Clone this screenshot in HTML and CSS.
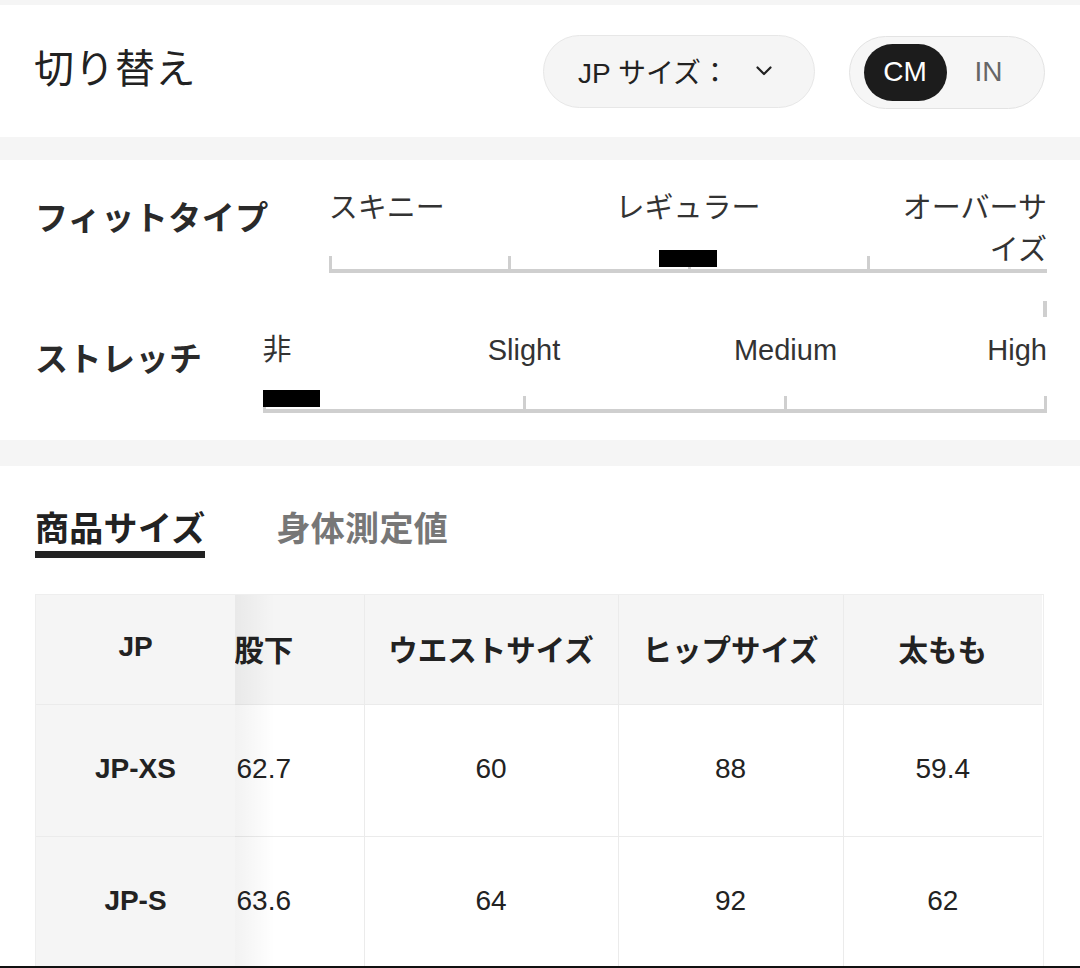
FILE: index.html
```html
<!DOCTYPE html>
<html lang="ja">
<head>
<meta charset="utf-8">
<title>サイズ</title>
<link rel="stylesheet" href="styles.css">
</head>
<body>
<div class="page">
  <div class="band band-top"></div>

  <section class="switch">
    <h2 class="switch-title">切り替え</h2>
    <div class="switch-controls">
      <div class="size-select">
        <span class="size-select-text">JP サイズ：</span>
        <svg class="chevron" width="16" height="10" viewBox="0 0 16 10"><path d="M1.5 1.5 L8 8 L14.5 1.5" fill="none" stroke="#222" stroke-width="2.2" stroke-linecap="round" stroke-linejoin="round"/></svg>
      </div>
      <div class="unit-toggle">
        <span class="unit unit-active">CM</span>
        <span class="unit unit-idle">IN</span>
      </div>
    </div>
  </section>

  <div class="band band-mid"></div>

  <section class="fit">
    <div class="fit-row">
      <div class="fit-label">フィットタイプ</div>
      <div class="scale">
        <div class="scale-labels scale-labels-fit">
          <span class="lbl lbl-start">スキニー</span>
          <span class="lbl lbl-mid2">レギュラー</span>
          <span class="lbl lbl-end4">オーバーサイズ</span>
        </div>
        <div class="track track-fit">
          <span class="seg"></span><span class="seg"></span><span class="seg"></span><span class="seg"></span>
          <span class="marker marker-center"></span>
        </div>
        <div class="end-tick"></div>
      </div>
    </div>

    <div class="fit-row fit-row-stretch">
      <div class="fit-label fit-label-stretch">ストレッチ</div>
      <div class="scale">
        <div class="scale-labels scale-labels-stretch">
          <span class="lbl lbl-start">非</span>
          <span class="lbl lbl-s1">Slight</span>
          <span class="lbl lbl-s2">Medium</span>
          <span class="lbl lbl-end6">High</span>
        </div>
        <div class="track track-stretch">
          <span class="seg"></span><span class="seg"></span><span class="seg seg-last"></span>
          <span class="marker marker-start"></span>
        </div>
      </div>
    </div>
  </section>

  <div class="band band-low"></div>

  <section class="sizes">
    <div class="tabs">
      <div class="tab tab-active">商品サイズ</div>
      <div class="tab">身体測定値</div>
    </div>

    <div class="size-table">
      <div class="fixed-col">
        <div class="fcell fcell-head">JP</div>
        <div class="fcell">JP-XS</div>
        <div class="fcell">JP-S</div>
      </div>
      <div class="scroll-area">
        <table class="data">
          <colgroup>
            <col class="c-inseam"><col class="c-waist"><col class="c-hip"><col class="c-thigh">
          </colgroup>
          <thead>
            <tr><th>股下</th><th>ウエストサイズ</th><th>ヒップサイズ</th><th>太もも</th></tr>
          </thead>
          <tbody>
            <tr><td>62.7</td><td>60</td><td>88</td><td>59.4</td></tr>
            <tr><td>63.6</td><td>64</td><td>92</td><td>62</td></tr>
          </tbody>
        </table>
      </div>
    </div>
  </section>
</div>
</body>
</html>
```

FILE: styles.css
```css
html, body {
  margin: 0;
  padding: 0;
  background: #fff;
}
body {
  font-family: "Liberation Sans", "Noto Sans CJK JP", sans-serif;
  color: #222;
}
.page {
  height: 968px;
  overflow: hidden;
  box-sizing: border-box;
  border-bottom: 2px solid #111;
}

.band { background: #f5f5f5; }
.band-top { height: 5px; }
.band-mid { height: 23px; }
.band-low { height: 26px; }

/* ---------- switch ---------- */
.switch {
  height: 132px;
  box-sizing: border-box;
  padding: 0 35px;
  display: flex;
  align-items: center;
  justify-content: space-between;
}
.switch-title {
  margin: 0 0 4px -1px;
  font-size: 40px;
  line-height: 48px;
  font-weight: 400;
  color: #222;
  letter-spacing: 0.5px;
}
.switch-controls {
  display: flex;
  align-items: center;
  gap: 34px;
}
.size-select {
  width: 272px;
  height: 73px;
  box-sizing: border-box;
  border-radius: 37px;
  background: #f5f5f5;
  border: 1.5px solid #e7e7e7;
  display: flex;
  align-items: center;
  padding-left: 34px;
  font-size: 28px;
  color: #222;
}
.chevron {
  margin-left: auto;
  margin-right: 42px;
}
.unit-toggle {
  width: 196px;
  height: 73px;
  box-sizing: border-box;
  border-radius: 37px;
  background: #f6f6f6;
  border: 1.5px solid #e3e3e3;
  display: flex;
  align-items: center;
  padding-left: 13.5px;
  margin-top: 2px;
  font-size: 28px;
}
.unit-active {
  width: 83px;
  height: 57px;
  border-radius: 29px;
  background: #1c1c1c;
  color: #fff;
  display: flex;
  align-items: center;
  justify-content: center;
}
.unit-idle {
  margin-left: 28px;
  color: #666;
}

/* ---------- fit ---------- */
.fit {
  height: 280px;
  box-sizing: border-box;
  padding: 27px 33px 27px 35px;
}
.fit-row {
  display: flex;
  align-items: flex-start;
  gap: 60px;
}
.fit-row-stretch { margin-top: 13px; }
.fit-label {
  font-size: 33px;
  line-height: 40px;
  font-weight: 700;
  color: #2a2a2a;
  letter-spacing: 0.5px;
  margin-top: 12px;
  white-space: nowrap;
}
.fit-label-stretch { margin-top: 10px; }
.scale {
  flex: 1;
  min-width: 0;
}
.scale-labels {
  display: grid;
  color: #333;
}
.scale-labels-fit {
  grid-template-columns: repeat(4, 1fr);
  font-size: 29px;
  line-height: 42px;
}
.scale-labels-stretch {
  grid-template-columns: repeat(6, 1fr);
  font-size: 29px;
  line-height: 40px;
}
.lbl-start { grid-column: 1; text-align: left; white-space: nowrap; }
.lbl-mid2 { grid-column: 2 / span 2; text-align: center; }
.lbl-end4 {
  grid-column: 4;
  justify-self: end;
  max-width: 150px;
  text-align: right;
}
.lbl-s1 { grid-column: 2 / span 2; text-align: center; }
.lbl-s2 { grid-column: 4 / span 2; text-align: center; }
.lbl-end6 { grid-column: 6; text-align: right; }

.track {
  position: relative;
  display: flex;
  height: 17px;
}
.track-fit { margin-top: -15px; }
.track-stretch { margin-top: 26px; }
.seg {
  flex: 1;
  border-left: 3px solid #cfcfcf;
  border-bottom: 4px solid #cfcfcf;
}
.seg-last { border-right: 3px solid #cfcfcf; }
.marker {
  position: absolute;
  bottom: 6px;
  height: 17px;
  width: 58px;
  background: #000;
}
.marker-center { left: calc(50% - 29px); }
.marker-start { left: 0; width: 57px; }
.end-tick {
  width: 4px;
  height: 16px;
  background: #cfcfcf;
  margin: 28px 0 0 auto;
}

/* ---------- sizes ---------- */
.sizes {
  padding: 41px 35px 0 35px;
}
.tabs {
  display: flex;
  gap: 71px;
  align-items: flex-start;
}
.tab {
  font-size: 34px;
  line-height: 44px;
  font-weight: 700;
  color: #777;
  letter-spacing: 0.3px;
}
.tab-active {
  color: #222;
  border-bottom: 7px solid #222;
}

.size-table {
  margin-top: 36px;
  width: 1009px;
  box-sizing: border-box;
  border: 1px solid #eeeeee;
  border-bottom: none;
  display: grid;
  grid-template-columns: 199px 1fr;
}
.fixed-col {
  background: #f5f5f5;
}
.fcell {
  height: 132px;
  box-sizing: border-box;
  border-bottom: 1px solid #ebebeb;
  padding-bottom: 3px;
  display: flex;
  align-items: center;
  justify-content: center;
  font-size: 28px;
  font-weight: 700;
  color: #222;
}
.fcell-head { height: 110px; padding-bottom: 5px; }

.scroll-area {
  position: relative;
  overflow: hidden;
}
.scroll-area::after {
  content: "";
  position: absolute;
  left: 0;
  top: 0;
  bottom: 0;
  width: 40px;
  background: linear-gradient(to right, rgba(0,0,0,0.05), rgba(0,0,0,0));
  pointer-events: none;
}
.data {
  margin-left: -71px;
  border-collapse: collapse;
  table-layout: fixed;
  width: 878px;
}
.c-inseam { width: 200px; }
.c-waist { width: 254px; }
.c-hip { width: 225px; }
.c-thigh { width: 199px; }
.data th, .data td {
  padding: 0;
  text-align: center;
  font-size: 28px;
  color: #222;
  border-bottom: 1px solid #ebebeb;
}
.data th + th, .data td + td {
  border-left: 1px solid #ebebeb;
}
.data th {
  height: 105px;
  padding-bottom: 4px;
  background: #f5f5f5;
  font-weight: 700;
  font-size: 29.5px;
}
.data td {
  height: 128px;
  padding-bottom: 3px;
  font-weight: 400;
  background: #fff;
}
```
